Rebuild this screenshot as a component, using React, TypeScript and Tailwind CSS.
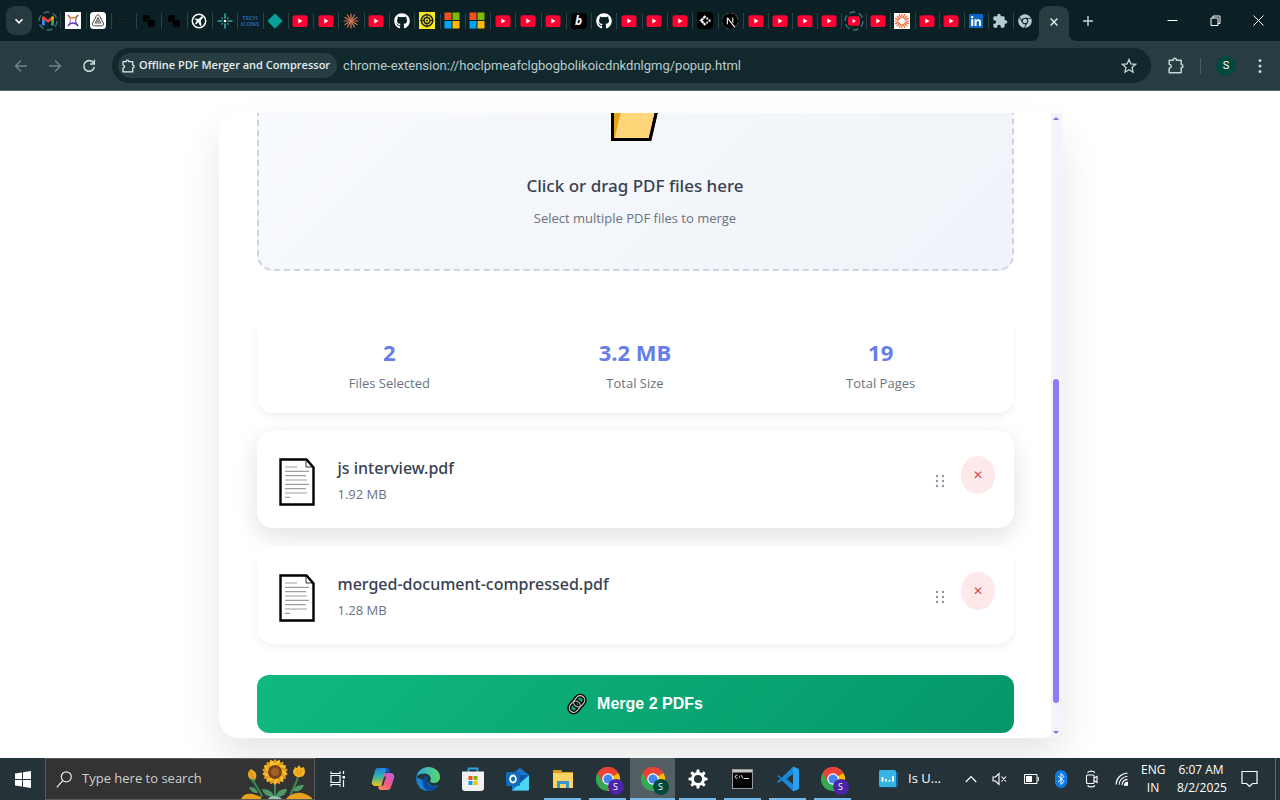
import type { ReactNode } from "react";
import { FaChrome, FaGithub, FaLinkedin } from "react-icons/fa";
import { MdExtension } from "react-icons/md";
import { SiNextdotjs } from "react-icons/si";

const rays = (count: number) => Array.from({ length: count }, (_, i) => (i * 360) / count);

function YouTube() {
  return (
    <svg viewBox="0 0 16 16" className="size-4">
      <rect x="0.5" y="2.2" width="15" height="11.8" rx="2.6" fill="#ff0033" />
      <path d="M6.3 5.6v4.8L10.5 8z" fill="#fff" />
    </svg>
  );
}

function LoadingRing({ children }: { children: ReactNode }) {
  return (
    <div className="relative flex size-5 items-center justify-center">
      <svg viewBox="0 0 20 20" className="absolute size-5">
        <circle cx="10" cy="10" r="9" fill="none" stroke="#3f7378" strokeWidth="1.4" strokeDasharray="6 3.4" />
      </svg>
      <div className="scale-80">{children}</div>
    </div>
  );
}

function Gmail() {
  return (
    <svg viewBox="0 0 16 16" className="size-4">
      <path d="M0.5 3.5v10h3.5V7z" fill="#4285f4" />
      <path d="M15.5 3.5v10H12V7z" fill="#34a853" />
      <path d="M0.5 4.5C0.5 2 3 1.5 4 3l4 3.4L12 3v4.2L8 10.5 4 7.2 0.5 6z" fill="#ea4335" />
      <path d="M12 3c1.2-1.5 3.5-1 3.5 1.3V5L12 8z" fill="#fbbc04" />
    </svg>
  );
}

function Cross() {
  return (
    <svg viewBox="0 0 16 17" className="h-[17px] w-4">
      <rect width="16" height="17" fill="#fff" />
      <path d="M3 3c2 4 8 4 10 0" fill="none" stroke="#f08a24" strokeWidth="1.6" />
      <path d="M3 14c2-4 8-4 10 0" fill="none" stroke="#5b3fd1" strokeWidth="1.6" />
      <path d="M3 3c3 3 3 8 0 11" fill="none" stroke="#c2458f" strokeWidth="1" />
      <path d="M13 3c-3 3-3 8 0 11" fill="none" stroke="#3a3580" strokeWidth="1" />
    </svg>
  );
}

function Triangle() {
  return (
    <svg viewBox="0 0 16 17" className="h-[17px] w-4">
      <rect width="16" height="17" rx="3.5" fill="#fff" />
      <path d="M8 2.8c.9 0 1.3.6 1.8 1.5l3.4 6.3c1 1.9.2 3.2-1.6 3.2H4.4c-1.8 0-2.6-1.3-1.6-3.2l3.4-6.3C6.7 3.4 7.1 2.8 8 2.8z" fill="none" stroke="#444" strokeWidth="1" />
      <path d="M8 5.5l2.8 5.5H5.2z M8 5.5v3.5 M5.2 11L8 9l2.8 2" fill="none" stroke="#555" strokeWidth="0.9" />
    </svg>
  );
}

function DarkMark() {
  return (
    <svg viewBox="0 0 16 16" className="size-4">
      <path d="M1 3l5 1.5h4L15 3v9l-5-1.5v3H6v-3L1 12z" fill="#0d1c20" />
      <path d="M3 6h4M9 6h4M3 9h4M9 9h4" stroke="#142a2e" />
    </svg>
  );
}

function Blocks() {
  return (
    <svg viewBox="0 0 16 16" className="size-4">
      <rect x="2" y="2" width="7" height="7" rx="1.5" fill="#010303" />
      <rect x="6.5" y="6.5" width="7.5" height="7.5" rx="1.5" fill="#000" stroke="#0a2024" strokeWidth="0.6" />
    </svg>
  );
}

function Compass() {
  return (
    <svg viewBox="0 0 16 16" className="size-4">
      <circle cx="8" cy="8" r="6.7" fill="none" stroke="#fff" strokeWidth="1.5" />
      <path d="M3 5.5l4.500.6 3.600-3.100 1.200 1.200-2.600 3.500.8 4.500-1.500.9L7.400 9.300 5 11.500 4 10.800 5.800 7.700z" fill="#fff" />
    </svg>
  );
}

function Spark() {
  return (
    <svg viewBox="0 0 16 16" className="size-4">
      <path d="M8 .5v5M8 10.500v5M.5 8h5M10.500 8h5" stroke="#2fa7a8" strokeWidth="1.7" />
      <path d="M4.500 4.500l1.300 1.300M11.500 4.500l-1.300 1.300M4.500 11.500l1.300-1.300M11.500 11.500l-1.300-1.300" stroke="#2fa7a8" strokeWidth="1.2" />
      <circle cx="8" cy="8" r="1.3" fill="#fff" />
    </svg>
  );
}

function TechIcons() {
  return (
    <div className="flex flex-col items-center text-[6px] leading-[6px] font-bold text-[#2563b0]">
      <span>TECH</span>
      <span>ICONS</span>
    </div>
  );
}

function Diamond() {
  return (
    <svg viewBox="0 0 16 16" className="size-4">
      <path d="M8 .8L15.2 8 8 15.2.8 8z" fill="#06a09b" stroke="#06a09b" strokeLinejoin="round" />
    </svg>
  );
}

function Burst({ boxed = false }: { boxed?: boolean }) {
  return (
    <svg viewBox="0 0 16 16" className="size-4">
      {boxed && <rect width="16" height="16" fill="#fff" />}
      {rays(boxed ? 16 : 12).map((angle) => (
        <path
          key={angle}
          d={boxed ? "M8 4.500V1" : "M8 8V1"}
          stroke={boxed ? "#ee6a35" : "#d97757"}
          strokeWidth="1.2"
          strokeLinecap="round"
          transform={`rotate(${angle} 8 8)`}
        />
      ))}
    </svg>
  );
}

function Target() {
  return (
    <svg viewBox="0 0 16 17" className="h-[17px] w-4">
      <rect width="16" height="17" fill="#f4ea1e" />
      <circle cx="8" cy="8.5" r="5.7" fill="none" stroke="#222" strokeWidth="1.6" />
      <circle cx="8" cy="8.5" r="3" fill="none" stroke="#222" strokeWidth="1.4" />
      <circle cx="8" cy="8.5" r="1" fill="#222" />
      <path d="M8 1.5v4M8 11.500v4M1.500 8.500h4M10.500 8.500h4" stroke="#222" />
    </svg>
  );
}

function Microsoft() {
  return (
    <svg viewBox="0 0 16 17" className="h-[17px] w-4">
      <rect x="0.5" y="0.5" width="7" height="7.5" fill="#f25022" />
      <rect x="8.5" y="0.5" width="7" height="7.5" fill="#7fba00" />
      <rect x="0.5" y="9" width="7" height="7.5" fill="#00a4ef" />
      <rect x="8.5" y="9" width="7" height="7.5" fill="#ffb900" />
    </svg>
  );
}

function LetterB() {
  return (
    <span className="flex size-4 items-center justify-center rounded-sm bg-black text-xs leading-4 font-bold text-white italic">
      b
    </span>
  );
}

function Pixels() {
  return (
    <svg viewBox="0 0 16 17" className="h-[17px] w-4">
      <rect width="16" height="17" rx="3" fill="#000" />
      <path d="M8.5 4L4 8.500 8.500 13" fill="none" stroke="#fff" strokeWidth="2.2" strokeDasharray="3 .4" />
      <path d="M9.300 5.500h1.800v2H9.300zM11.500 7.500h2v2.200h-2zM9.300 9.700h1.800v1.800H9.300z" fill="#fff" />
    </svg>
  );
}

function NextMark() {
  return (
    <span className="flex size-4 items-center justify-center rounded-full bg-white">
      <SiNextdotjs className="size-4 text-black" />
    </span>
  );
}

const github = <FaGithub className="size-4 text-white" />;

const pinnedTabs: ReactNode[] = [
  <LoadingRing><Gmail /></LoadingRing>, <Cross />, <Triangle />, <DarkMark />, <Blocks />, <Blocks />, <Compass />,
  <Spark />, <TechIcons />, <Diamond />, <YouTube />, <YouTube />, <Burst />, <YouTube />, github, <Target />,
  <Microsoft />, <Microsoft />, <YouTube />, <YouTube />, <YouTube />, <LetterB />, github, <YouTube />, <YouTube />,
  <YouTube />, <Pixels />, <NextMark />, <YouTube />,
];

const recentTabs: ReactNode[] = [
  <YouTube />, <YouTube />, <YouTube />, <LoadingRing><YouTube /></LoadingRing>, <YouTube />, <Burst boxed />,
  <YouTube />, <YouTube />, <FaLinkedin className="size-4 text-[#0a66c2] [background:linear-gradient(#fff,#fff)_center/12px_12px_no-repeat]" />,
  <MdExtension className="size-4 text-[#b4cdd0]" />, <FaChrome className="size-3.5 text-[#b4cdd0]" />,
];

function TabGroup({ tabs, width, closed }: { tabs: ReactNode[]; width: string; closed?: boolean }) {
  return (
    <div className={`flex ${width}`}>
      {tabs.map((icon, i) => (
        <div key={i} className="relative flex h-5 flex-1 items-center justify-center">
          {icon}
          {!(closed && i === tabs.length - 1) && <span className="absolute -right-px h-4 w-px bg-[#2b4347]" />}
        </div>
      ))}
    </div>
  );
}

function TabStrip() {
  return (
    <div className="flex h-[41px] items-center bg-[#0a2024]">
      <button aria-label="Search tabs" className="ml-1.5 flex h-[29px] w-[26px] items-center justify-center rounded-[9px] bg-[#263b3f] text-white">
        <svg viewBox="0 0 10 10" className="size-2.5" fill="none" stroke="currentColor" strokeWidth="1.6"><path d="M1.500 3.300L5 6.800l3.500-3.500" /></svg>
      </button>
      <div className="ml-[3px] flex">
        <TabGroup tabs={pinnedTabs} width="w-[733px]" />
        <TabGroup tabs={recentTabs} width="w-[269px]" closed />
      </div>
      <div className="relative ml-0.5 flex h-[35px] w-[30px] items-center justify-center self-end rounded-t-[9px] bg-[#283d41] pb-1 text-[#e0eeee]">
        <svg viewBox="0 0 46 8" className="absolute bottom-0 h-2 w-[46px] max-w-none text-[#283d41]" fill="currentColor">
          <path d="M8 0v8H0c5 0 8-3 8-8zM38 0v8h8c-5 0-8-3-8-8z" />
        </svg>
        <button aria-label="Close tab">
          <svg viewBox="0 0 8 8" className="size-2" stroke="currentColor" strokeWidth="1.4"><path d="M.6.6l6.800 6.800M7.400.6L.6 7.400" /></svg>
        </button>
      </div>
      <button aria-label="New tab" className="ml-3.5 text-[#c4d6d8]">
        <svg viewBox="0 0 10 10" className="size-2.5" stroke="currentColor" strokeWidth="1.4"><path d="M5 0v10M0 5h10" /></svg>
      </button>
      <div className="ml-auto flex text-white">
        <button aria-label="Minimize" className="flex h-8 w-[43px] items-center justify-center">
          <svg viewBox="0 0 11 11" className="size-[11px]" stroke="currentColor"><path d="M.5 5.500h10" /></svg>
        </button>
        <button aria-label="Restore" className="flex h-8 w-[43px] items-center justify-center">
          <svg viewBox="0 0 11 11" className="size-[11px]" fill="none" stroke="currentColor"><path d="M1 3h7v7.500H1zM3 3V1h7v7.500H8" /></svg>
        </button>
        <button aria-label="Close" className="flex h-8 w-[43px] items-center justify-center">
          <svg viewBox="0 0 11 11" className="size-[11px]" stroke="currentColor"><path d="M.5.5l10 10M10.500.5l-10 10" /></svg>
        </button>
      </div>
    </div>
  );
}

function PuzzleOutline({ className }: { className: string }) {
  return (
    <svg viewBox="0 0 16 17" className={className} fill="none" stroke="currentColor" strokeWidth="1.5" strokeLinejoin="round">
      <path d="M1.200 3.200h4c0-2.600 3.200-2.600 3.200 0h4.800v4.300c2.300.1 2.300 3.200 0 3.300v5H1.200v-4.600c2.700-.6 2.700-3.300 0-3.900z" />
    </svg>
  );
}

function Toolbar() {
  return (
    <div className="flex h-[50px] items-center border-b border-[#5c6b6e] bg-[#283d41] font-[Roboto,sans-serif] text-[#c4d6d8]">
      <button aria-label="Back" className="ml-3.5 text-[#6f8386]">
        <svg viewBox="0 0 14 14" className="size-3.5" fill="none" stroke="currentColor" strokeWidth="1.4"><path d="M13 7H2M7 1.500L1.500 7 7 12.500" /></svg>
      </button>
      <button aria-label="Forward" className="ml-5 text-[#6f8386]">
        <svg viewBox="0 0 14 14" className="size-3.5" fill="none" stroke="currentColor" strokeWidth="1.4"><path d="M1 7h11M7 1.500L12.500 7 7 12.500" /></svg>
      </button>
      <button aria-label="Reload" className="ml-5">
        <svg viewBox="0 0 14 14" className="size-3.5" fill="none" stroke="currentColor" strokeWidth="1.6"><path d="M11.500 4A5.300 5.300 0 1 0 12.300 8M12.300 .8V5H8" /></svg>
      </button>
      <div className="ml-4 flex h-[35px] flex-1 items-center rounded-full bg-[#11282c] pr-3.5 pl-1.5">
        <div className="flex h-[25px] items-center rounded-full bg-[#283d41] pr-[7px] pl-1 font-['Open_Sans',sans-serif] text-[11px] font-semibold text-[#e3eff0]">
          <PuzzleOutline className="mr-1 h-3.5 w-[13px]" />
          Offline PDF Merger and Compressor
        </div>
        <input
          aria-label="Address"
          readOnly
          value="chrome-extension://hoclpmeafclgbogbolikoicdnkdnlgmg/popup.html"
          className="ml-1.5 flex-1 bg-transparent text-[13px] text-[#b9cccf] outline-none"
        />
        <button aria-label="Bookmark this tab">
          <svg viewBox="0 0 16 16" className="size-4" fill="none" stroke="currentColor" strokeWidth="1.3"><path d="M8 1.500l1.900 4.400 4.700.4-3.600 3.200 1.100 4.700L8 11.700l-4.100 2.500L5 9.500 1.400 6.300l4.700-.4z" /></svg>
        </button>
      </div>
      <button aria-label="Extensions" className="ml-[17px]"><PuzzleOutline className="h-[17px] w-4" /></button>
      <span className="ml-4 h-4 w-px bg-[#49605f]" />
      <button className="ml-[15px] size-5 rounded-full bg-[#00493c] text-[11px] leading-5 text-white">S</button>
      <button aria-label="Menu" className="mr-[18px] ml-[22px]">
        <svg viewBox="0 0 4 16" className="h-4 w-1" fill="currentColor"><circle cx="2" cy="2.5" r="1.5" /><circle cx="2" cy="8" r="1.5" /><circle cx="2" cy="13.5" r="1.5" /></svg>
      </button>
    </div>
  );
}

function Folder() {
  return (
    <svg viewBox="0 0 48 56" className="h-14 w-12">
      <path d="M1.500 54.500V8h14l5 6h17v8h9l-7.500 32.500z" fill="#e3a21a" stroke="#000" strokeWidth="3" />
      <path d="M4 52l7-30h34l-7 31H4z" fill="#ffd679" />
      <path d="M39 54.500L46.500 22" stroke="#000" strokeWidth="3" />
    </svg>
  );
}

function Page() {
  return (
    <svg viewBox="0 0 36 48" className="mt-1 h-12 w-9">
      <path d="M1.500 1.500h26l7 8v37h-33z" fill="#fff" stroke="#000" strokeWidth="2.4" />
      <path d="M27 2v7h7" fill="none" stroke="#000" strokeWidth="0.8" />
      <path d="M6 9h12M6 13.300h24M6 17.600h21M6 22h22M6 26.300h24M6 30.600h21M6 35h22M6 39.300h5" stroke="#a0a0a0" strokeWidth="1.2" />
    </svg>
  );
}

function Link() {
  return (
    <svg viewBox="0 0 20 22" className="h-[22px] w-5" fill="none">
      <g transform="rotate(40 10 11)">
        <rect x="5.5" y="1.5" width="9" height="12" rx="4.5" stroke="#000" strokeWidth="4" />
        <rect x="5.5" y="8.5" width="9" height="12" rx="4.5" stroke="#000" strokeWidth="4" />
        <rect x="5.5" y="1.5" width="9" height="12" rx="4.5" stroke="#c9c9c9" strokeWidth="1.2" />
        <rect x="5.5" y="8.5" width="9" height="12" rx="4.5" stroke="#c9c9c9" strokeWidth="1.2" />
      </g>
    </svg>
  );
}

const stats = [
  { value: "2", label: "Files Selected" },
  { value: "3.2 MB", label: "Total Size" },
  { value: "19", label: "Total Pages" },
];

const files = [
  { name: "js interview.pdf", size: "1.92 MB", shadow: "shadow-[0_8px_24px_rgba(0,0,0,0.12)]" },
  { name: "merged-document-compressed.pdf", size: "1.28 MB", shadow: "shadow-[0_4px_6px_rgba(0,0,0,0.05)]" },
];

function FileRow({ name, size, shadow }: (typeof files)[number]) {
  return (
    <li className={`flex h-[97px] items-center rounded-2xl bg-white pr-[19px] pl-[22px] ${shadow}`}>
      <Page />
      <div className="ml-[23px] flex-1">
        <div className="font-['Noto_Sans',sans-serif] text-base leading-6 font-medium text-[#374151]">{name}</div>
        <div className="mt-1 text-[13px] leading-5 text-[#6b7280]">{size}</div>
      </div>
      <svg viewBox="0 0 10 14" className="mt-0.5 h-3.5 w-2.5" fill="#8f96a3">
        {[2, 7, 12].map((y) => (
          <g key={y}><circle cx="2" cy={y} r="1.2" /><circle cx="8" cy={y} r="1.2" /></g>
        ))}
      </svg>
      <button aria-label={`Remove ${name}`} className="mb-2.5 ml-4 h-[38px] w-[34px] rounded-[50%] bg-[#fde9e9] text-xs text-[#dc4a4a]">
        ✕
      </button>
    </li>
  );
}

function Popup() {
  return (
    <main className="flex min-h-0 flex-1 justify-center overflow-hidden bg-white px-6 pt-[22px] pb-5">
      <div className="flex w-full max-w-[843px] rounded-[20px] bg-white shadow-[0_20px_40px_rgba(0,0,0,0.1)]">
        <div className="flex min-w-0 flex-1 flex-col justify-end overflow-hidden rounded-[20px] pr-[37px] pb-[5px] pl-[38px]">
          <button className="flex shrink-0 flex-col items-center rounded-2xl border-2 border-dashed border-[#cbd5e1] bg-linear-135 from-[#f8fafc] to-[#f0f3f9] pt-10 pb-[39px]">
            <Folder />
            <span className="mt-[31px] font-['Noto_Sans',sans-serif] text-[17px] leading-7 font-medium text-[#374151]">Click or drag PDF files here</span>
            <span className="mt-1.5 text-[13px] leading-6 text-[#6b7280]">Select multiple PDF files to merge</span>
          </button>
          <dl className="mt-[45px] grid shrink-0 grid-cols-3 gap-5 rounded-2xl bg-white px-5 py-5 text-center shadow-[0_4px_6px_rgba(0,0,0,0.05)]">
            {stats.map((s) => (
              <div key={s.label} className="flex flex-col-reverse">
                <dt className="mt-[5px] text-[13px] leading-5 text-[#6b7280]">{s.label}</dt>
                <dd className="text-[22px] leading-8 font-bold text-[#667eea]">{s.value}</dd>
              </div>
            ))}
          </dl>
          <ul className="mt-[18px] flex shrink-0 flex-col gap-[19px]">
            {files.map((f) => <FileRow key={f.name} {...f} />)}
          </ul>
          <button className="mt-[31px] flex h-[58px] shrink-0 items-center justify-center gap-2.5 rounded-xl bg-linear-135 from-[#10b981] to-[#059669] font-['Liberation_Sans',sans-serif] text-base font-bold text-white">
            <Link />
            Merge 2 PDFs
          </button>
        </div>
        <div className="flex w-[11px] flex-col items-center justify-between bg-[#f1f5f9] py-1">
          <span className="border-x-3 border-b-3 border-x-transparent border-b-[#7c74d8]" />
          <span className="mt-auto mb-7 h-[324px] w-1.5 rounded-full bg-[#8b7cf8]" />
          <span className="border-x-3 border-t-3 border-x-transparent border-t-[#7c74d8]" />
        </div>
      </div>
    </main>
  );
}

function ChromeApp({ badge }: { badge: string }) {
  return (
    <div className="relative size-6">
      <svg viewBox="0 0 24 24" className="size-6">
        <path d="M12 12L1.600 6A12 12 0 0 1 22.400 6z" fill="#ea4335" />
        <path d="M12 12h0L22.400 6A12 12 0 0 1 12 24z" fill="#fbbc04" />
        <path d="M12 12v12A12 12 0 0 1 1.600 6z" fill="#34a853" />
        <path d="M12 6h10.400A12 12 0 0 0 1.600 6l5.200 9z" fill="#ea4335" />
        <circle cx="12" cy="12" r="5.8" fill="#fff" />
        <circle cx="12" cy="12" r="4.6" fill="#4285f4" />
      </svg>
      <span className={`absolute -right-1 -bottom-1 flex size-4 items-center justify-center rounded-full text-[9px] text-white ${badge}`}>S</span>
    </div>
  );
}

const apps: { name: string; icon: ReactNode; open?: boolean; active?: boolean }[] = [
  {
    name: "Task View",
    icon: (
      <svg viewBox="0 0 16 16" className="size-4" fill="none" stroke="#fff" strokeWidth="1.2">
        <path d="M1 4.500h9v7H1zM1 .5v2h9v-2M1 15.500v-2h9v2M13.500 0v3M13.500 9v7" /><rect x="12.5" y="5" width="2.5" height="2.5" fill="#fff" stroke="none" />
      </svg>
    ),
  },
  {
    name: "Copilot",
    icon: (
      <svg viewBox="0 0 24 24" className="size-6">
        <defs>
          <linearGradient id="cpA" x1="0" y1="0" x2="0" y2="1"><stop stopColor="#1e7fe0" /><stop offset=".5" stopColor="#36b5a2" /><stop offset="1" stopColor="#f2c811" /></linearGradient>
          <linearGradient id="cpB" x1="1" y1="0" x2="0" y2="1"><stop stopColor="#b660e8" /><stop offset=".5" stopColor="#f0568c" /><stop offset="1" stopColor="#ff9a4a" /></linearGradient>
        </defs>
        <path d="M13 1h3c2 0 2.500 1.500 3 4l-3 1z" fill="#1b4fc4" />
        <path d="M7 1h7c1.500 0 1.500 1 1 3l-3.500 12c-.6 2-1.500 3-3.500 3H5c-3 0-5-2-4-5L4 4C4.500 2 5 1 7 1z" fill="url(#cpA)" />
        <path d="M16 6h3c3 0 5 2 4 5l-3 9c-.6 2-1.500 3-3.500 3H10c-2 0-2.500-1.500-3-3.500 2 0 3-1 3.500-2.500L12.500 9c.6-2 1.500-3 3.500-3z" fill="url(#cpB)" />
        <path d="M14 10l-2.500 8" stroke="#263338" strokeWidth="1.6" strokeLinecap="round" />
      </svg>
    ),
  },
  {
    name: "Edge",
    icon: (
      <svg viewBox="0 0 24 24" className="size-6">
        <defs>
          <linearGradient id="edA" x1="0" y1="0" x2="1" y2="0"><stop stopColor="#2aa5e8" /><stop offset="1" stopColor="#5bd86a" /></linearGradient>
        </defs>
        <path d="M.3 10C-.5 18 5 24 12 24c5 0 8.500-2.500 10-6-3 1.500-8 1.500-9.500-2z" fill="#1683d8" />
        <path d="M.3 10.500C1.500 3.500 7 0 12 0c7 0 12 4.500 12 10 0 4-3 6-6 6-3 0-4.500-1.200-3.800-2.200C16 11 13.500 6.500 8.500 6.500c-4 0-7 1.500-8.200 4z" fill="url(#edA)" />
        <path d="M9.500 9.500c-4 2-4.500 10 1.500 14 4.500 1.200 9-1 11.200-5-5 2.200-10 .5-11.200-3.500-.6-2.200 0-4 1-5-.6-.8-1.500-.9-2.500-.5z" fill="#0b4c9a" />
      </svg>
    ),
  },
  {
    name: "Store",
    icon: (
      <svg viewBox="0 0 24 26" className="h-[26px] w-6">
        <path d="M7.500 6V2.500h9V6" fill="none" stroke="#2aa8e0" strokeWidth="1.8" />
        <path d="M1 5.500h22V22a3 3 0 0 1-3 3H4a3 3 0 0 1-3-3z" fill="#f1f1f1" />
        <path d="M7.500 10h4v4h-4z" fill="#f25022" /><path d="M12.500 10h4v4h-4z" fill="#7fba00" />
        <path d="M7.500 15h4v4h-4z" fill="#00a4ef" /><path d="M12.500 15h4v4h-4z" fill="#ffb900" />
      </svg>
    ),
  },
  {
    name: "Outlook",
    icon: (
      <svg viewBox="0 0 24 24" className="size-6">
        <path d="M6 7l8-6 9 7v14a1.500 1.500 0 0 1-1.500 1.500H6z" fill="#1a78c8" />
        <path d="M6 8h16L12 17z" fill="#1353a0" />
        <path d="M23 8.500L6 23.500h15.500A1.500 1.500 0 0 0 23 22z" fill="#50d4f5" />
        <rect x="0" y="5" width="14" height="14" rx="1.2" fill="#0f6cbd" />
        <ellipse cx="7" cy="12" rx="2.9" ry="3.5" fill="none" stroke="#fff" strokeWidth="1.8" />
      </svg>
    ),
  },
  {
    name: "File Explorer",
    open: true,
    icon: (
      <svg viewBox="0 0 22 20" className="h-5 w-[22px]">
        <path d="M1 1h8l1.500 2H21v4H1z" fill="#d99b1c" /><path d="M1 4h20v15H1z" fill="#fcd462" />
        <path d="M5 19v-7h12v7h-3v-4H8v4z" fill="#3b93d0" />
      </svg>
    ),
  },
  { name: "Chrome personal", open: true, icon: <ChromeApp badge="bg-[#4a25a8]" /> },
  { name: "Chrome", open: true, active: true, icon: <ChromeApp badge="bg-[#00493c]" /> },
  {
    name: "Settings",
    open: true,
    icon: (
      <svg viewBox="0 0 20 20" className="size-5">
        <circle cx="10" cy="10" r="5.5" fill="none" stroke="#fff" strokeWidth="3" />
        {rays(8).map((a) => <path key={a} d="M8.300 4L8.700.5h2.600L11.700 4z" fill="#fff" transform={`rotate(${a} 10 10)`} />)}
      </svg>
    ),
  },
  {
    name: "Command Prompt",
    open: true,
    icon: (
      <svg viewBox="0 0 21 20" className="h-5 w-[21px]">
        <rect x="0.5" y="0.5" width="20" height="19" fill="#050505" stroke="#9a9a9a" /><path d="M1 1h19v2.500H1z" fill="#c8c8c8" />
        <path d="M5.500 6.500a1.500 1.500 0 1 0 0 2.500M7.500 7v.8M7.500 8.500v.8M9 6l2 3.500M12 9.500h5" fill="none" stroke="#fff" strokeWidth="0.9" />
      </svg>
    ),
  },
  {
    name: "Visual Studio Code",
    open: true,
    icon: (
      <svg viewBox="0 0 24 26" className="h-[26px] w-6">
        <path d="M17 1L6 12 2.500 9 1 10l16 15z" fill="#1279c4" /><path d="M17 25L6 14l-3.500 3L1 16 17 1z" fill="#1a86d4" />
        <path d="M17 8l-6.500 5L17 18z" fill="#263338" /><path d="M17 .5l6 2.500v20l-6 2.500z" fill="#2aa0ee" />
      </svg>
    ),
  },
  { name: "Chrome work", open: true, icon: <ChromeApp badge="bg-[#4a25a8]" /> },
];

function Sunflowers() {
  return (
    <svg viewBox="0 0 76 42" className="h-[42px] w-[76px] self-end">
      <path d="M37 40V24M24 40C22 32 17 30 15 22M52 40c2-8 6-12 8-20" stroke="#3d8a57" strokeWidth="2" fill="none" />
      <path d="M36 40c-8 0-11-4-12-8 7 0 11 3 12 8zM38 40c1-6 5-8 11-8-1 5-4 8-11 8zM20 36c-5 0-8-2-9-6 5 0 8 2 9 6zM55 34c2-5 5-6 11-6-2 5-5 7-11 6z" fill="#4c9a66" />
      {rays(18).map((a) => <path key={a} d="M34 9C34 5 36 3 37 2c1 1 3 3 3 7z" fill={a % 40 ? "#f5c02c" : "#e89a1b"} transform={`rotate(${a} 37 15)`} />)}
      <circle cx="37" cy="15" r="7" fill="#7a4318" /><circle cx="37" cy="15" r="4" fill="#a3642a" />
      <path d="M10 17c0-3 2-4 3-5 1 1 2 1 3 2 3 2 3 6 1 9-3 1-7-1-7-6z" fill="#eba925" /><path d="M12 14c1 3 2 5 4 8" stroke="#c9851a" fill="none" /><path d="M10 19c2 3 5 4 8 3l-3 4z" fill="#3d8a57" />
      <path d="M55 14l2-4 2 1 2-3 2 3 3-1 1 4c0 5-3 6-6 6s-6-2-6-6z" fill="#f3b41f" /><path d="M59 12l1 6M63 12l-1 6" stroke="#d18d18" fill="none" />
      <path d="M3 42c3-6 9-7 20-2v2zM48 42c6-7 16-9 26-1v1z" fill="#e8a01e" /><path d="M30 42c2-4 10-4 14 0z" fill="#8fc7b4" />
    </svg>
  );
}

function Tray() {
  return (
    <div className="ml-auto flex items-center pr-1 text-white">
      <button className="flex items-center gap-2.5 text-[13px]">
        <svg viewBox="0 0 19 18" className="h-[18px] w-[19px]">
          <rect x="2" y="1.5" width="17" height="16" rx="1.5" fill="#0b66a8" /><rect width="17" height="17" rx="1.5" fill="#35b4e5" />
          <path d="M3.500 7v4.500M7 9v2.500M10.500 10v1.500M14 6v5.500" stroke="#fff" strokeWidth="1.9" />
        </svg>
        Is U...
      </button>
      <svg viewBox="0 0 12 8" className="ml-6 h-2 w-3" fill="none" stroke="currentColor" strokeWidth="1.2"><path d="M.8 7L6 1.500 11.200 7" /></svg>
      <svg viewBox="0 0 15 14" className="ml-[15px] h-3.5 w-[15px]" fill="none" stroke="currentColor" strokeWidth="1.1"><path d="M1 5h2.500L7 1.500v11L3.500 9H1zM9.500 4.500l4.500 5M14 4.500l-4.500 5" /></svg>
      <svg viewBox="0 0 15 10" className="ml-[17px] h-2.5 w-[15px]" fill="none" stroke="currentColor"><path d="M.5.5h12.500v9H.5z" /><path d="M2 2h6v6H2z" fill="currentColor" stroke="none" /><path d="M14.300 3v4" /></svg>
      <svg viewBox="0 0 12 18" className="ml-4 h-[18px] w-3"><rect width="12" height="18" rx="6" fill="#0b7be8" /><path d="M3 5.800l6 5.700L6 14.500v-11L9 6.500l-6 5.700" fill="none" stroke="#fff" /></svg>
      <svg viewBox="0 0 13 18" className="ml-[18px] h-[18px] w-[13px]" fill="none" stroke="currentColor" strokeWidth="1.1"><rect x="1.5" y="5" width="7.5" height="8.5" rx="1" /><path d="M9 8l3-1.500v6L9 10.500M2.500 2.500C4.500.6 8 .6 10 2.500M2.500 15.500c2 1.900 5.500 1.900 7.500 0" /></svg>
      <svg viewBox="0 0 14 14" className="ml-[17px] size-3.5" fill="none" stroke="currentColor" strokeWidth="1.1"><path d="M1 12.500C1.500 6 6 1.500 12.500 1M4 12.800c.3-4.600 3.800-8.200 8.500-8.600M7 13c.3-3 2.500-5.300 5.500-5.600" /><path d="M9.500 13.200c.1-1.500 1.300-2.800 3-3v3z" fill="currentColor" /></svg>
      <div className="ml-3 w-6 text-center text-xs leading-[18px]">ENG<br />IN</div>
      <div className="ml-3 w-12 text-center text-xs leading-[18px] whitespace-nowrap">6:07 AM<br />8/2/2025</div>
      <button aria-label="Notifications" className="ml-4">
        <svg viewBox="0 0 17 18" className="h-[18px] w-[17px]" fill="none" stroke="currentColor" strokeWidth="1.2"><path d="M1 1.500h15v12h-4.500l-3 3-3-3H1z" /></svg>
      </button>
      <span className="ml-[17px] h-[42px] w-px bg-[#5d686b]" />
    </div>
  );
}

function Taskbar() {
  return (
    <footer className="flex h-[42px] items-center bg-[#253237]">
      <button aria-label="Start" className="flex w-[45px] justify-center">
        <svg viewBox="0 0 16 17" className="h-[17px] w-4" fill="#fff"><path d="M0 2.500L7 1.500V8H0zM8 1.300L16 0v8H8zM0 9h7v6.500l-7-1zM8 9h8v8l-8-1.300z" /></svg>
      </button>
      <label className="flex h-full w-[270px] items-center border border-[#5a5a5a] bg-[#333333] pl-2.5 text-[#e6e6e6]">
        <svg viewBox="0 0 16 17" className="h-[17px] w-4 shrink-0" fill="none" stroke="currentColor" strokeWidth="1.2"><circle cx="10.3" cy="5.8" r="5" /><path d="M6.800 9.500L.8 16.300" /></svg>
        <input aria-label="Search" placeholder="Type here to search" className="ml-2.5 min-w-0 flex-1 bg-transparent text-[13px] outline-none placeholder:text-[#cfcfcf]" />
        <Sunflowers />
      </label>
      {apps.map((app) => (
        <button
          key={app.name}
          aria-label={app.name}
          className={`relative flex h-full w-[45px] shrink-0 items-center justify-center ${app.active ? "bg-[#545f63]" : ""}`}
        >
          {app.icon}
          {app.open && <span className={`absolute bottom-0 h-0.5 bg-[#76b9ed] ${app.active ? "w-full" : "w-[37px]"}`} />}
        </button>
      ))}
      <Tray />
    </footer>
  );
}

export default function App() {
  return (
    <div className="flex h-screen flex-col overflow-hidden font-['Open_Sans','Noto_Sans',sans-serif]">
      <header>
        <TabStrip />
        <Toolbar />
      </header>
      <Popup />
      <Taskbar />
    </div>
  );
}
